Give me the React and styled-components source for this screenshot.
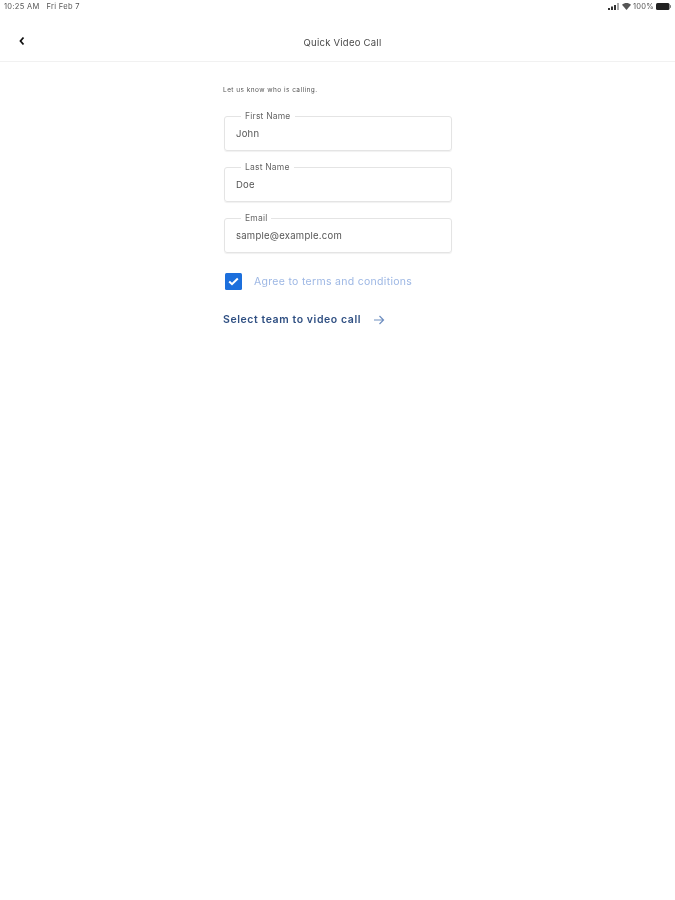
import React from "react";
import styled, { createGlobalStyle } from "styled-components";

const Global = createGlobalStyle`
  html, body { margin: 0; padding: 0; background: #fff; }
  body { font-family: Inter, "Noto Sans", sans-serif; }
`;

const Page = styled.div`
  width: 675px;
  height: 900px;
  display: flex;
  flex-direction: column;
  overflow: hidden;
  background: #fff;
  filter: blur(0.5px);
`;

const StatusBar = styled.div`
  height: 13px;
  padding: 0 4px;
  display: flex;
  align-items: center;
  justify-content: space-between;
  font-size: 7.5px;
  letter-spacing: 0.3px;
  color: #555;
`;

const StatusLeft = styled.div`
  display: flex;
  gap: 7px;
`;

const StatusRight = styled.div`
  display: flex;
  align-items: center;
  gap: 2px;
`;

const Header = styled.header`
  height: 48px;
  position: relative;
  display: flex;
  align-items: center;
  justify-content: center;
  border-bottom: 1px solid #f1f1f1;
`;

const BackButton = styled.button`
  position: absolute;
  left: 17px;
  top: 21px;
  width: 10px;
  height: 14px;
  padding: 0;
  border: 0;
  background: none;
  display: flex;
`;

const Title = styled.h1`
  margin: 10px 0 0 10px;
  font-size: 9.5px;
  font-weight: 400;
  letter-spacing: 0.25px;
  color: #4a4a4a;
`;

const Content = styled.main`
  width: 229px;
  margin-left: 223px;
  padding-top: 23px;
  display: flex;
  flex-direction: column;
`;

const Intro = styled.p`
  margin: 0 0 17px;
  height: 10px;
  line-height: 10px;
  font-size: 6.5px;
  letter-spacing: 0.45px;
  color: #555;
`;

const Fields = styled.div`
  display: flex;
  flex-direction: column;
  gap: 12px;
`;

const Field = styled.fieldset`
  margin: 0 0 0 1px;
  padding: 0 11px;
  height: 39px;
  box-sizing: border-box;
  border: 1px solid #e4e4e4;
  border-radius: 3px;
  box-shadow: 0 1px 1px rgba(0, 0, 0, 0.06);
`;

const Legend = styled.legend`
  margin-left: 5px;
  padding: 0 4px;
  font-size: 8.5px;
  line-height: 8px;
  letter-spacing: 0.2px;
  color: #666;
`;

const Value = styled.div`
  font-size: 9.5px;
  line-height: 12px;
  margin-top: 8px;
  letter-spacing: 0.25px;
  color: #555;
`;

const Agree = styled.label`
  margin-top: 20px;
  padding-left: 2px;
  display: flex;
  align-items: center;
  gap: 12px;
`;

const Check = styled.span`
  width: 17px;
  height: 17px;
  border-radius: 1.5px;
  background: #1c6fdc;
  display: flex;
  align-items: center;
  justify-content: center;
`;

const AgreeText = styled.span`
  font-size: 10.5px;
  letter-spacing: 0.3px;
  color: #9db7e4;
`;

const NextLink = styled.a`
  margin-top: 23px;
  display: flex;
  align-items: center;
  gap: 12px;
  font-size: 10.5px;
  font-weight: 600;
  letter-spacing: 0.58px;
  color: #2f4f82;
`;

export default function App() {
  return (
    <>
      <Global />
      <Page>
        <StatusBar>
          <StatusLeft>
            <span>10:25 AM</span>
            <span>Fri Feb 7</span>
          </StatusLeft>
          <StatusRight>
            <svg width="12" height="7" viewBox="0 0 12 7">
              <rect x="0" y="5" width="2" height="2" fill="#333" />
              <rect x="3" y="3.5" width="2" height="3.5" fill="#333" />
              <rect x="6" y="2" width="2" height="5" fill="#333" />
              <rect x="9" y="0" width="2" height="7" fill="#aaa" />
            </svg>
            <svg width="9" height="7" viewBox="0 0 9 7">
              <path d="M0 1.8C2.6-.5 6.4-.5 9 1.8L4.5 7Z" fill="#555" />
            </svg>
            <span>100%</span>
            <svg width="15" height="7" viewBox="0 0 15 7">
              <rect x="0" y="0" width="13.5" height="7" rx="1.5" fill="#222" />
              <rect x="14" y="2.2" width="1" height="2.6" fill="#777" />
            </svg>
          </StatusRight>
        </StatusBar>
        <Header>
          <BackButton aria-label="Back">
            <svg width="10" height="14" viewBox="0 0 10 14">
              <path d="M6.5 3.5 3.5 7l3 3.5" fill="none" stroke="#111" strokeWidth="1.8" />
            </svg>
          </BackButton>
          <Title>Quick Video Call</Title>
        </Header>
        <Content>
          <Intro>Let us know who is calling.</Intro>
          <Fields>
            <Field>
              <Legend>First Name</Legend>
              <Value>John</Value>
            </Field>
            <Field>
              <Legend>Last Name</Legend>
              <Value>Doe</Value>
            </Field>
            <Field>
              <Legend>Email</Legend>
              <Value>sample@example.com</Value>
            </Field>
          </Fields>
          <Agree>
            <Check>
              <svg width="11" height="9" viewBox="0 0 11 9">
                <path d="M1.2 4.5 4 7.2 9.8 1.5" fill="none" stroke="#fff" strokeWidth="2" />
              </svg>
            </Check>
            <AgreeText>Agree to terms and conditions</AgreeText>
          </Agree>
          <NextLink>
            <span>Select team to video call</span>
            <svg width="12" height="10" viewBox="0 0 12 10">
              <path d="M1 5h9.5M6.5 1l4 4-4 4" fill="none" stroke="#6f8fc0" strokeWidth="1.2" />
            </svg>
          </NextLink>
        </Content>
      </Page>
    </>
  );
}
